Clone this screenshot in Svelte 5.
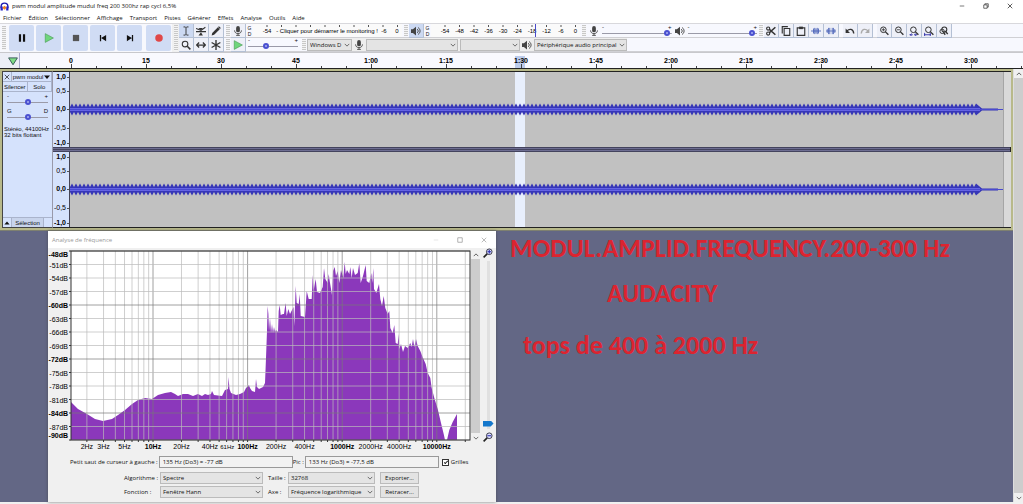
<script lang="ts">
  const menus = ['Fichier', 'Édition', 'Sélectionner', 'Affichage', 'Transport', 'Pistes', 'Générer', 'Effets', 'Analyse', 'Outils', 'Aide'];

  const transport = [
    { name: 'pause', label: 'Pause' },
    { name: 'play', label: 'Lecture' },
    { name: 'stop', label: 'Arrêt' },
    { name: 'start', label: 'Aller au début' },
    { name: 'end', label: 'Aller à la fin' },
    { name: 'record', label: 'Enregistrer' }
  ];

  const tools = [
    { name: 'ibeam', label: 'Sélection' },
    { name: 'envelope', label: 'Niveau' },
    { name: 'pencil', label: 'Retouche' },
    { name: 'zoom', label: 'Zoom' },
    { name: 'shift', label: 'Glissement temporel' },
    { name: 'multi', label: 'Multi-outils' }
  ];

  const editGroups = [
    [
      { name: 'cut', label: 'Couper' },
      { name: 'copy', label: 'Copier' },
      { name: 'paste', label: 'Coller' },
      { name: 'trim', label: 'Rogner' },
      { name: 'silence', label: 'Silence' }
    ],
    [
      { name: 'undo', label: 'Annuler' },
      { name: 'redo', label: 'Refaire' }
    ],
    [
      { name: 'zoomin', label: 'Zoom avant' },
      { name: 'zoomout', label: 'Zoom arrière' },
      { name: 'fitsel', label: 'Ajuster la sélection' },
      { name: 'fitproj', label: 'Ajuster le projet' },
      { name: 'toggle', label: 'Basculer le zoom' }
    ]
  ];

  const meterDb = ['-54', '-48', '-42', '-36', '-30', '-24', '-18', '-12', '-6', '0'];

  const times = ['0', '15', '30', '45', '1:00', '1:15', '1:30', '1:45', '2:00', '2:15', '2:30', '2:45', '3:00'];
  const ticks = Array.from({ length: 40 }, (_, i) => 26 + i * 25);

  const amps = [
    { label: '1,0', y: 5 },
    { label: '0,5', y: 19 },
    { label: '0,0', y: 37 },
    { label: '-0,5', y: 56 },
    { label: '-1,0', y: 71 }
  ];

  // zigzag envelope of a channel, centred on y
  function envelope(y: number, high: number, low: number) {
    const top: string[] = [];
    const bottom: string[] = [];
    for (let x = 0; x <= 904; x += 4) {
      top.push(`${x},${y - low} ${x + 2},${y - high}`);
      bottom.unshift(`${x + 2},${y + high} ${x},${y + low}`);
    }
    return [...top, `912,${y - 1}`, `928,${y - 1}`, `928,${y + 1}`, `912,${y + 1}`, ...bottom].join(' ');
  }
  const peaks = envelope(37.5, 6, 2.5);

  // frequency plot
  const left = 23;
  const top = 3;
  const dbs = Array.from({ length: 15 }, (_, i) => -48 - i * 3);
  const dbY = (db: number) => top + (-48 - db) * 4.5;
  const hzX = (hz: number) => 105 + (Math.log10(hz) - 1) * 94.6;
  const gridHz: number[] = [];
  for (const d of [1, 10, 100, 1000, 10000]) {
    for (let m = 1; m < 10; m++) {
      if (d * m >= 2 && d * m <= 20000) gridHz.push(d * m);
    }
  }
  const hzLabels = [2, 3, 5, 10, 20, 40, 61, 100, 200, 400, 1000, 2000, 4000, 10000];
  const isDecade = (hz: number) => Number.isInteger(Math.log10(hz));

  const spectrum = [
    0,151, 7,158, 16,163, 24,168, 32,170, 41,168, 47,164, 54,159, 61,153, 67,149, 74,147, 81,148, 87,144, 94,142,
    100,141, 104,143, 107,145, 112,143, 117,143, 122,145, 127,143, 131,145, 134,143, 137,144, 140,143, 141,140,
    143,144, 151,145, 154,139, 157,138, 157.5,126, 158.5,138, 160,142, 165,144, 169,143, 173,141, 175,137, 178,134,
    179,137, 181,140, 184,141, 185,128, 186,136, 188,138, 192,136, 194,132, 195,107, 196,80, 196.6,55, 197.4,63,
    198,80, 199,67, 200,82, 201,73, 202,82, 203,76, 204,81, 205,79, 207,81, 207.7,60, 208.7,54, 209.7,64, 212,63,
    213,63, 214.6,52, 215.7,65, 217.3,58, 219,63, 222.5,56, 223.3,75, 224.7,35, 225.7,52, 227.7,53, 228.7,43,
    229.7,65, 234,66, 235.7,40, 237.7,48, 240.7,48, 241.7,24, 242.7,39, 244.7,28, 246,41, 249,42, 251.7,36,
    253,17, 254.3,28, 256.7,32, 257.7,23, 258.7,30, 261,44, 262,20, 263.7,16, 265,25, 266.7,20, 268.3,32, 270,19,
    272.3,27, 273.7,11, 274.7,23, 276,19, 278.3,23, 279.3,16, 280.7,27, 282,17, 284,24, 286.7,22, 288.3,12,
    289.7,32, 292,25, 294.7,14, 295.7,30, 298.3,32, 300.3,22, 301.3,32, 302.3,17, 303,38, 305.3,42, 308,33,
    309.3,48, 311,55, 312.7,45, 314.3,57, 316.7,63, 318.3,60, 319.3,77, 321.7,82, 323.3,74, 324.7,92, 326.7,93,
    327.7,83, 328.3,98, 330,93, 332,101, 334,95, 336.7,97, 339.3,92, 340.7,96, 342,88, 343.3,96, 345,88,
    346.7,95, 349.3,100, 352,107, 354.7,113, 356.7,122, 359.3,127, 360.7,137, 363.3,147, 366.7,158, 370,172,
    372.7,183, 374,189, 376,189, 378.3,179, 381.7,171, 386,163, 386,189, 0,189
  ].join(' ');

  let grids = $state(true);
  let zoomLevel = $state(3);
</script>

<svelte:head>
  <title>pwm modul amplitude mudul freq 200 300hz rap cycl 6,5%</title>
</svelte:head>

{#snippet icon(name: string)}
  <svg class="icon" viewBox="0 0 16 16" aria-hidden="true">
    {#if name === 'pause'}
      <path d="M3 2h3.500v12H3zM9.500 2H13v12H9.500z" fill="#111" />
    {:else if name === 'play'}
      <path d="M2 1l13 7-13 7z" fill="#6fd67c" stroke="#4a9a55" />
    {:else if name === 'stop'}
      <path d="M3 3h10v10H3z" fill="#555" />
    {:else if name === 'start'}
      <path d="M3 3h2v10H3zM13 3v10L5 8z" fill="#111" />
    {:else if name === 'end'}
      <path d="M11 3h2v10h-2zM3 3v10l8-5z" fill="#111" />
    {:else if name === 'record'}
      <circle cx="8" cy="8" r="6" fill="#e04848" />
    {:else if name === 'ibeam'}
      <path d="M4 1.5h3l1 1 1-1h3M8 2.5v11M4 14.5h3l1-1 1 1h3" fill="none" stroke="#333" stroke-width="1.5" />
    {:else if name === 'envelope'}
      <path d="M0 9h16M0 4l8 3 7-5" fill="none" stroke="#333" stroke-width="1.8" />
      <path d="M4 3h7L8 7zM4 15h7L8 10z" fill="#333" />
    {:else if name === 'pencil'}
      <path d="M1 15l1-4 9-9 3 3-9 9z" fill="#333" />
      <path d="M12 1l3 3" stroke="#333" stroke-width="2" />
    {:else if name === 'zoom'}
      <circle cx="6.5" cy="6.5" r="4.5" fill="none" stroke="#333" stroke-width="1.7" />
      <path d="M10 10l5 5" stroke="#333" stroke-width="2.4" />
    {:else if name === 'shift'}
      <path d="M2 8h12M5 4L1 8l4 4M11 4l4 4-4 4" fill="none" stroke="#333" stroke-width="2" />
    {:else if name === 'multi'}
      <path d="M8 0v16M1 4l14 8M15 4L1 12" stroke="#333" stroke-width="2.2" />
    {:else if name === 'mic'}
      <rect x="5" y="0" width="6" height="10" rx="3" fill="#444" />
      <path d="M2.500 7c0 7 11 7 11 0M8 12v3M5 15h6" fill="none" stroke="#444" stroke-width="1.4" />
    {:else if name === 'speaker'}
      <path d="M0 5h3l5-4v14l-5-4H0z" fill="#444" />
      <path d="M10 5c2 2 2 4 0 6M11.500 2.500c4 3 4 8 0 11" fill="none" stroke="#444" stroke-width="1.5" />
    {:else if name === 'cut'}
      <circle cx="3.500" cy="4" r="2.500" fill="none" stroke="#333" stroke-width="1.800" />
      <circle cx="3.500" cy="12" r="2.500" fill="none" stroke="#333" stroke-width="1.800" />
      <path d="M5 5l10 9M5 11l10-9" stroke="#333" stroke-width="2.400" />
    {:else if name === 'copy'}
      <path d="M5 4h9v11H5zM2 12V1h9" fill="none" stroke="#333" stroke-width="1.800" />
    {:else if name === 'paste'}
      <path d="M2 3h12v12H2z" fill="none" stroke="#333" stroke-width="1.800" />
      <path d="M5 1h6v4H5z" fill="#333" />
    {:else if name === 'trim'}
      <path d="M0 8h16M4 4v8M6 3v10M8 4v8M10 3v10M12 4v8" stroke="#4a62b8" stroke-width="1.400" />
    {:else if name === 'silence'}
      <path d="M0 8h16M2 5v6M4 3v10M6 3v10M10 3v10M12 3v10M14 5v6" stroke="#4a62b8" stroke-width="1.300" />
    {:else if name === 'undo'}
      <path d="M3 8c4-4 10-4 11 4" fill="none" stroke="#333" stroke-width="2.200" />
      <path d="M1 4v7h7z" fill="#333" />
    {:else if name === 'redo'}
      <path d="M13 8C9 4 3 4 2 12" fill="none" stroke="#aaa" stroke-width="2.200" />
      <path d="M15 4v7H8z" fill="#aaa" />
    {:else if name === 'menu'}
      <path d="M0 4h16l-8 9z" fill="#111" />
    {:else if name === 'collapse'}
      <path d="M1 12h14L8 4z" fill="#111" />
    {:else if name === 'chevron'}
      <path d="M2 5l6 6 6-6" fill="none" stroke="#444" stroke-width="2" />
    {:else if name === 'up'}
      <path d="M2 11l6-6 6 6" fill="none" stroke="#444" stroke-width="2.200" />
    {:else if name === 'pin'}
      <path d="M1 3h14L8 14z" fill="#7fdc86" stroke="#355" stroke-width="1.500" />
    {:else if name === 'min'}
      <path d="M2 8h12" stroke="currentColor" stroke-width="1.500" />
    {:else if name === 'restore'}
      <path d="M2 5h9v9H2zM5 5V2h9v9h-3" fill="none" stroke="currentColor" stroke-width="1.600" />
    {:else if name === 'max'}
      <path d="M2 2h12v12H2z" fill="none" stroke="currentColor" stroke-width="2" />
    {:else if name === 'close'}
      <path d="M2 2l12 12M14 2L2 14" stroke="currentColor" stroke-width="1.800" />
    {:else if name === 'plotin' || name === 'plotout'}
      <path d="M7 9l-6 6" stroke="#222" stroke-width="2.600" />
      <circle cx="10" cy="6" r="4.500" fill="#dfe3ff" stroke="#334" stroke-width="1.500" />
      <path d="M7 6h6" stroke="#2222aa" stroke-width="1.600" />
      {#if name === 'plotin'}<path d="M10 3v6" stroke="#2222aa" stroke-width="1.600" />{/if}
    {:else if name === 'toggle'}
      <circle cx="8.500" cy="5.500" r="4" fill="none" stroke="#333" stroke-width="1.700" />
      <circle cx="5" cy="8.500" r="3.500" fill="none" stroke="#333" stroke-width="1.500" />
      <path d="M10 8l4 5M7 10l3 4" stroke="#333" stroke-width="2.200" />
    {:else}
      <circle cx="7" cy="6" r="4.500" fill="none" stroke="#333" stroke-width="1.600" />
      <path d="M10 9l5 5" stroke="#333" stroke-width="2.200" />
      {#if name === 'zoomin'}
        <path d="M4.500 6h5M7 3.500v5" stroke="#333" stroke-width="1.300" />
      {:else if name === 'zoomout'}
        <path d="M4.500 6h5" stroke="#333" stroke-width="1.300" />
      {:else if name === 'fitsel'}
        <path d="M1 14h5M8 14h4M4 12l-2 2 2 2M10 12l2 2-2 2" fill="none" stroke="#33a" stroke-width="1.500" />
      {:else}
        <path d="M0 14h11M1 11v5M10 11v5" stroke="#33a" stroke-width="1.500" />
      {/if}
    {/if}
  </svg>
{/snippet}

{#snippet level(label: string, value: number, low: string, high: string)}
  <label class="level">
    <span class="ends"><span>{low}</span><span>{high}</span></span>
    <input type="range" min="0" max="100" {value} aria-label={label} />
  </label>
{/snippet}

{#snippet dropdown(id: string, value: string)}
  <span class="dropdown">
    <select {id} aria-label={id}><option>{value}</option></select>
    {@render icon('chevron')}
  </span>
{/snippet}

<div class="app">
  <header class="titlebar">
    <svg class="logo" viewBox="0 0 16 16" aria-hidden="true">
      <path d="M2 11V8a6 6 0 0 1 12 0v3" fill="none" stroke="#1a1ab0" stroke-width="2.500" />
      <path d="M1 8h4v7H1zM11 8h4v7h-4z" fill="#2222c8" />
      <path d="M5 11l2-2 1 4 1-4 2 2" fill="none" stroke="#f08020" stroke-width="2.500" />
    </svg>
    <span class="caption">pwm modul amplitude mudul freq 200 300hz rap cycl 6,5%</span>
    <div class="winbtns">
      <button aria-label="Réduire">{@render icon('min')}</button>
      <button aria-label="Restaurer">{@render icon('restore')}</button>
      <button aria-label="Fermer">{@render icon('close')}</button>
    </div>
  </header>

  <nav class="menubar">
    {#each menus as m}
      <a href="#{m}">{m}</a>
    {/each}
  </nav>

  <div class="toolbars">
    <div class="transport">
      <i class="grip"></i>
      {#each transport as t}
        <button class={t.name} aria-label={t.label}>{@render icon(t.name)}</button>
      {/each}
    </div>
    <i class="grip"></i>
    <div class="tools">
      {#each tools as t, i}
        <button class="tool" class:active={i === 0} aria-label={t.label}>{@render icon(t.name)}</button>
      {/each}
    </div>
    <div class="docks">
      <div class="dock">
        <i class="grip"></i>
        <button class="tool" aria-label="Enregistrement">{@render icon('mic')}</button>
        <span class="gd"><span>G</span><span>D</span></span>
        <svg class="meter" width="149" height="13">
          {#each meterDb as _, i}
            <path d="M{14 + i * 14.5} 1v2" stroke="#555" />
          {/each}
          <text x="14" y="9">-54</text>
          <text x="74" y="9">- Cliquer pour démarrer le monitoring !</text>
          <text x="131" y="9">-6</text>
          <text x="144" y="9">0</text>
        </svg>
        <i class="grip"></i>
        <button class="tool active" aria-label="Lecture">{@render icon('speaker')}</button>
        <span class="gd"><span>G</span><span>D</span></span>
        <svg class="meter" width="149" height="13">
          {#each meterDb as db, i}
            <path d="M{14 + i * 14.5} 1v2" stroke="#555" />
            <text x={14 + i * 14.5} y="9">{db}</text>
          {/each}
          <path d="M104.500 0v13" stroke="#4a4ac8" />
        </svg>
        <i class="grip"></i>
        <div class="mixer">
          {@render icon('mic')}
          {@render level("Volume d'enregistrement", 97, '-', '+')}
          {@render icon('speaker')}
          {@render level('Volume de lecture', 97, '-', '+')}
        </div>
        <i class="grip"></i>
        <div class="edit">
          {#each editGroups as group}
            <div class="group">
              {#each group as b}
                <button class="tool" aria-label={b.label}>{@render icon(b.name)}</button>
              {/each}
            </div>
          {/each}
        </div>
      </div>
      <div class="dock">
        <i class="grip"></i>
        <button class="tool" aria-label="Lire à vitesse">{@render icon('play')}</button>
        <div class="speed">{@render level('Vitesse de lecture', 33, '-', '+')}</div>
        <i class="grip"></i>
        <div class="devices">
          {@render dropdown('hote', 'Windows D')}
          {@render icon('mic')}
          {@render dropdown('entree', '')}
          {@render dropdown('canaux', '')}
          {@render icon('speaker')}
          {@render dropdown('sortie', 'Périphérique audio principal')}
        </div>
      </div>
    </div>
  </div>

  <div class="ruler">
    <button class="pin" aria-label="Tête de lecture">{@render icon('pin')}</button>
    <svg class="timeline" width="100%" height="15">
      <rect x="495" y="3" width="10" height="12" fill="#bccbea" />
      {#each ticks as x, i}
        <path d="M{x + 0.5} {i % 3 === 1 ? 11 : 13}V15" stroke="#444" />
      {/each}
      {#each times as t, i}
        <text x={51 + i * 75} y="10">{t}</text>
      {/each}
    </svg>
  </div>

  <div class="body">
    <main>
      <section class="track">
        <div class="panel">
          <div class="row head">
            <button class="x" aria-label="Fermer la piste">{@render icon('close')}</button>
            <button class="name">pwm modul {@render icon('menu')}</button>
          </div>
          <div class="row">
            <button class="half">Silencer</button>
            <button class="half">Solo</button>
          </div>
          <div class="sliders">
            {@render level('Gain', 50, '-', '+')}
            {@render level('Balance', 50, 'G', 'D')}
          </div>
          <p>Stéréo, 44100Hz<br />32 bits flottant</p>
          <div class="row foot">
            <button class="x" aria-label="Réduire la piste">{@render icon('collapse')}</button>
            <button class="select">Sélection</button>
          </div>
        </div>

        <div class="channels">
          {#each [0, 1] as c (c)}
            <div class="channel">
              <svg class="scale" width="17" height="75">
                {#each amps as a, i}
                  <text class:strong={i % 2 === 0} x="13" y={a.y + 2}>{a.label}</text>
                  <path d="M14 {a.y + 0.5}h3" stroke="#555" />
                {/each}
              </svg>
              <svg class="wave" viewBox="0 0 941 75" preserveAspectRatio="none">
                <rect width="941" height="75" fill="#c1c1c1" />
                <rect x="933" width="8" height="75" fill="#d9d9d9" />
                <path d="M933.500 0v75" stroke="#a5a5a5" />
                <rect x="445" width="10" height="75" fill="#e8effc" />
                <polygon points={peaks} fill="#3636b8" />
                <rect y="36" width="910" height="3" fill="#6464e4" />
                <path d="M0 37.500h933" stroke="#4a4ad0" />
              </svg>
            </div>
          {/each}
        </div>
      </section>

      <section class="workspace">
        <div class="dialog" role="dialog" aria-label="Analyse de fréquence">
          <div class="dlgtitle">
            <span>Analyse de fréquence</span>
            <button disabled aria-label="Réduire">{@render icon('min')}</button>
            <button aria-label="Agrandir">{@render icon('max')}</button>
            <button aria-label="Fermer">{@render icon('close')}</button>
          </div>

          <div class="plotrow">
            <svg class="plot" width="423" height="204">
              <rect x={left} y={top} width="399" height="189" fill="#fff" />
              <polygon points={spectrum} transform="translate({left} {top})" fill="#8b38bb" />
              {#if grids}
                {#each gridHz as hz}
                  <path d="M{hzX(hz)} {top}v189" stroke={isDecade(hz) ? '#777' : '#bbb'} stroke-opacity="0.7" />
                {/each}
                {#each dbs as db}
                  <path d="M{left} {dbY(db)}h399" stroke={db % 12 === 0 ? '#777' : '#bbb'} stroke-opacity="0.7" />
                {/each}
              {/if}
              <rect x={left} y={top} width="399" height="189" fill="none" stroke="#333" />
              {#each dbs as db, i}
                <path d="M{left - 2} {dbY(db)}h2" stroke="#333" />
                <text
                  class:strong={db % 12 === 0 || i === 14}
                  text-anchor="end"
                  x={left - 3}
                  y={i === 0 ? 9 : i === 14 ? 190 : dbY(db) + 3}>{db}dB</text
                >
              {/each}
              {#each gridHz as hz}
                <path d="M{hzX(hz)} {top + 189}v2" stroke="#333" />
              {/each}
              {#each hzLabels as hz}
                <text class:strong={isDecade(hz)} class:small={hz === 61} text-anchor="middle" x={hzX(hz)} y="201">{hz}Hz</text>
              {/each}
            </svg>
            <div class="vscroll">
              <button aria-label="Monter">{@render icon('up')}</button>
              <i class="thumb"></i>
              <button aria-label="Descendre">{@render icon('chevron')}</button>
            </div>
            <div class="vzoom">
              {@render icon('plotin')}
              <input type="range" min="0" max="200" bind:value={zoomLevel} aria-label="Zoom" />
              {@render icon('plotout')}
            </div>
          </div>

          <div class="values">
            <label for="curseur">Petit saut de curseur à gauche :</label>
            <input id="curseur" readonly value="135 Hz (Do3) = -77 dB" />
            <label for="pic">Pic :</label>
            <input id="pic" readonly value="133 Hz (Do3) = -77,5 dB" />
            <label class="check"><input type="checkbox" bind:checked={grids} />Grilles</label>
          </div>
          <div class="options">
            <label for="algorithme">Algorithme :</label>
            {@render dropdown('algorithme', 'Spectre')}
            <label for="taille">Taille :</label>
            {@render dropdown('taille', '32768')}
            <button>Exporter...</button>
            <label for="fonction">Fonction :</label>
            {@render dropdown('fonction', 'Fenêtre Hann')}
            <label for="axe">Axe :</label>
            {@render dropdown('axe', 'Fréquence logarithmique')}
            <button>Retracer...</button>
          </div>
        </div>

        <div class="notes">
          <h1>MODUL.AMPLID.FREQUENCY.200-300 Hz</h1>
          <h2>AUDACITY</h2>
          <h3>tops de 400 à 2000 Hz</h3>
        </div>
      </section>
    </main>

    <div class="vscroll page">
      <button aria-label="Monter">{@render icon('up')}</button>
      <i class="thumb"></i>
      <button aria-label="Descendre">{@render icon('chevron')}</button>
    </div>
  </div>
</div>

<style>
  :global(body) { background: #f0f0f0; }
  .app {
    display: flex; flex-direction: column; min-height: 100vh; box-sizing: border-box; padding-bottom: 2px;
    background: #f0f0f0; color: #111; font: 6px/8px "Open Sans", "Noto Sans", sans-serif;
  }
  button, input, select { font: inherit; color: inherit; margin: 0; padding: 0; box-sizing: border-box; border-radius: 0; }
  button { display: flex; align-items: center; justify-content: center; border: none; background: none; }
  .icon { width: 10px; height: 10px; flex: none; display: block; }

  .titlebar { display: flex; align-items: center; height: 12px; background: #fff; }
  .logo { width: 9px; height: 9px; margin-right: 3px; }
  .caption { flex: 1; }
  .winbtns { display: flex; gap: 14px; padding-right: 8px; }
  .winbtns .icon { width: 6px; height: 6px; }
  .winbtns button { width: 10px; height: 10px; }
  .menubar { display: flex; gap: 7px; align-items: center; height: 11px; padding-left: 3px; background: #fff; }
  .menubar a { color: inherit; text-decoration: none; }

  .toolbars { display: flex; height: 30px; background: #f0f0f0; border-bottom: 1px solid #c8c8cc; border-top: 1px solid #d8d8dc; box-sizing: border-box; }
  .grip { flex: none; width: 4px; margin: 1px 1px 1px 2px; background: repeating-linear-gradient(#c8c8c8 0 1px, #f4f4f4 1px 2px); }
  .transport { display: flex; gap: 2px; padding: 1px 1px 1px 0; background: #f7f8fd; }
  .transport button { width: 25px; background: #d0dcf4; border-radius: 2px; }
  .transport .record { margin-left: 2px; }
  .tools { display: grid; grid-template-columns: repeat(3, 15px); grid-template-rows: 14px 14px; }
  .tool { width: 15px; height: 14px; background: #eef0f8; border-right: 1px solid #b4c0d4; border-bottom: 1px solid #b4c0d4; flex: none; }
  .tool.active { background: #ccd9f2; }
  .docks { flex: 1; min-width: 0; display: grid; grid-template-rows: 14px 14px; background: #f7f8fe; }
  .dock { display: flex; border-bottom: 1px solid #d0d0d4; box-sizing: border-box; }
  .gd { display: grid; align-content: center; width: 7px; font: 5px/6px "Liberation Sans", Arial, sans-serif; text-align: center; }
  .meter { flex: none; font: 6px "Liberation Sans", Arial, sans-serif; text-anchor: middle; background: #fafafa; }
  .mixer { display: flex; align-items: center; gap: 3px; padding-left: 2px; width: 168px; }
  .speed { width: 50px; padding: 0 2px; }
  .edit { display: flex; gap: 4px; }
  .group { display: flex; }
  .devices { display: flex; align-items: center; gap: 2px; background: #eee; }
  .devices .dropdown:nth-of-type(1) { width: 45px; }
  .devices .dropdown:nth-of-type(2) { width: 92px; }
  .devices .dropdown:nth-of-type(3) { width: 60px; }
  .devices .dropdown:nth-of-type(4) { width: 93px; }

  .level { display: grid; flex: 1; min-width: 0; align-content: center; }
  .ends { display: flex; justify-content: space-between; font: 6px/5px "Liberation Sans", Arial, sans-serif; }
  .level input { appearance: none; display: block; width: 100%; height: 6px; background: linear-gradient(#9a9aa8, #9a9aa8) center / 100% 1px no-repeat; }
  .level input::-webkit-slider-thumb { appearance: none; width: 6px; height: 6px; border-radius: 50%; box-sizing: border-box; border: 2px solid #4a50d0; background: #a8b0f0; }

  .dropdown { display: grid; align-items: center; min-width: 0; }
  .dropdown select, .dropdown .icon { grid-area: 1 / 1; }
  .dropdown select { appearance: none; width: 100%; height: 12px; padding: 0 2px; background: #e4e4e4; border: 1px solid #bbb; }
  .dropdown .icon { width: 6px; height: 6px; justify-self: end; margin-right: 2px; pointer-events: none; }

  .ruler { display: flex; height: 16px; box-sizing: border-box; background: #f9f9fe; border-bottom: 1px solid #222; }
  .pin { width: 20px; flex: none; padding-left: 7px; background: #eceef6; border-right: 1px solid #aac; }
  .timeline { flex: 1; min-width: 0; font: bold 7px "Liberation Sans", Arial, sans-serif; text-anchor: middle; }

  .body { display: flex; flex: 1; }
  main { flex: 1; min-width: 0; display: flex; flex-direction: column; }
  .track { display: flex; padding: 2px; background: #b8b98a; }
  .panel {
    display: flex; flex-direction: column; width: 51px; box-sizing: border-box; flex: none; background: #d5e2fc; border: 1px solid #444; border-right-color: #99a;
    font: 6px/6px "Liberation Sans", Arial, sans-serif;
  }
  .row { display: flex; height: 9px; border-bottom: 1px solid #aab4cc; }
  .row button { border-right: 1px solid #aab4cc; }
  .row .icon { width: 6px; height: 6px; }
  .x { width: 9px; }
  .name { flex: 1; gap: 1px; white-space: nowrap; }
  .half { flex: 1; }
  .sliders { display: grid; gap: 4px; padding: 2px 4px; }
  .panel p { margin: 4px 0 0 1px; white-space: nowrap; }
  .foot { margin-top: auto; border-bottom: none; border-top: 1px solid #aab4cc; }
  .foot .select { width: 32px; background: #c8d4ec; }
  .channels {
    flex: 1; min-width: 0; display: grid; grid-template-rows: 75px 75px; row-gap: 5px; border: 1px solid #222; border-left: none;
    background: linear-gradient(#44445e 0 1px, #6e6e92 1px 2px, #44445e 2px 3px, #6e6e92 3px 4px, #44445e 4px 5px) center / 100% 5px no-repeat;
  }
  .channel { display: flex; }
  .scale { flex: none; background: #d5e2fc; font: 7px "Liberation Sans", Arial, sans-serif; text-anchor: end; border-right: 1px solid #445; box-sizing: border-box; }
  .wave { flex: 1; min-width: 0; height: 75px; display: block; }
  .strong { font-weight: bold; }
  .small { font-size: 6px; }

  .workspace { flex: 1; display: flex; align-items: stretch; gap: 14px; padding-left: 48px; background: #636785; border-top: 1px solid #7e8070; }
  .dialog { width: 448px; flex: none; background: #f0f0f0; box-shadow: 0 0 3px #444a; }
  .dlgtitle { display: flex; align-items: center; gap: 14px; height: 17px; padding: 0 7px 0 4px; background: #fff; color: #999; }
  .dlgtitle span { flex: 1; }
  .dlgtitle button { width: 10px; }
  .dlgtitle .icon { width: 6px; height: 6px; }
  .dlgtitle button:disabled { opacity: 0.4; }
  .plotrow { display: flex; }
  .plot { flex: none; font: 7px "Liberation Sans", Arial, sans-serif; }
  .vscroll { display: flex; flex-direction: column; width: 9px; height: 192px; margin-top: 2px; background: #f0f0f0; }
  .vscroll button { height: 9px; flex: none; }
  .vscroll .icon { width: 6px; height: 6px; }
  .thumb { flex: 1; background: #cdcdcd; }
  .vzoom { display: flex; flex-direction: column; align-items: center; gap: 3px; width: 16px; height: 194px; }
  .vzoom input { appearance: none; flex: 1; min-height: 0; width: 11px; writing-mode: vertical-lr; direction: rtl; background: linear-gradient(#e0e0e0, #e0e0e0) center / 3px 100% no-repeat; }
  .vzoom input::-webkit-slider-thumb { appearance: none; width: 11px; height: 6px; background: #1478cc; clip-path: polygon(0 0, 75% 0, 100% 50%, 75% 100%, 0 100%); }

  .values { display: flex; align-items: center; margin-top: 4px; padding-left: 22px; }
  .values label { white-space: nowrap; padding-right: 1px; }
  .values input:not([type]) { width: 134px; height: 12px; padding: 0 3px; border: 1px solid #999; background: #f2f2f2; }
  .values .check { display: flex; align-items: center; gap: 2px; padding-left: 3px; }
  .check input { appearance: none; width: 7px; height: 7px; border: 1px solid #333; background: #fff; display: grid; }
  .check input:checked::before { content: ""; width: 3px; height: 1px; margin: 1px; border: solid #222; border-width: 0 0 1px 1px; transform: rotate(-45deg); }
  .options { display: grid; grid-template-columns: 36px 103px 25px 87px 44px; row-gap: 2px; align-items: center; padding: 4px 0 3px 76px; }
  .options label { white-space: nowrap; }
  .options label:nth-of-type(even) { padding-left: 5px; }
  .options button { height: 12px; margin-left: 5px; background: #e3e3e3; border: 1px solid #bbb; }

  .notes { color: #dc2430; font-family: Carlito, Calibri, Lato, sans-serif; white-space: nowrap; }
  h1, h2, h3 { margin: 0; font-size: 26px; line-height: 28px; font-weight: bold; }
  h1 { margin-top: 3px; }
  h2 { margin: 17px 0 24px 97px; }
  h3 { margin-left: 13px; }
  .page { height: auto; margin: 0; border-left: 1px solid #ddd; }
</style>
